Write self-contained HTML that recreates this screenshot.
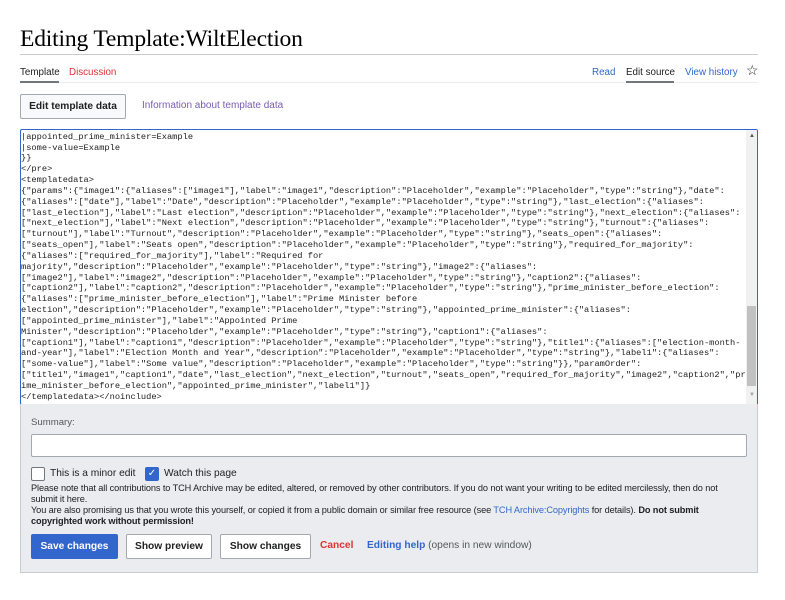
<!DOCTYPE html>
<html><head><meta charset="utf-8"><style>
*{box-sizing:border-box;margin:0;padding:0}
body{width:785px;height:600px;background:#fff;font-family:"Liberation Sans",sans-serif;position:relative;overflow:hidden;color:#202122}
.abs{position:absolute}
h1{position:absolute;left:20px;top:26px;font-family:"Liberation Serif",serif;font-weight:normal;font-size:23.6px;color:#000;letter-spacing:-0.2px}
.rule{left:20px;width:738px;top:54px;height:1px;background:#c8ccd1}
.tab{font-size:9.8px;top:67px}
.tabline{top:82px;height:1px;background:#eaecf0;left:20px;width:738px}
.btn{border:1px solid #a2a9b1;border-radius:2px;background:#f8f9fa;font-weight:bold;font-size:10.2px;display:flex;align-items:center;justify-content:center;color:#202122}
.ta{left:20px;top:129px;width:738px;height:276px;border:1px solid #36c;border-radius:2px;overflow:hidden;background:#fff}
.code{position:absolute;left:0px;top:-9px;font-family:"Liberation Mono",monospace;font-size:8.7px;line-height:10.83px;white-space:pre;color:#222}
.sb{position:absolute;right:0;top:0;width:11px;height:274px;background:#f1f1f1}
.panel{left:20px;top:404px;width:738px;height:169px;background:#eaecf0;border:1px solid #c8ccd1;border-top:none}
.sm{font-size:9.2px;line-height:11px;color:#202122;letter-spacing:-0.1px}
a{text-decoration:none}
</style></head><body>
<h1>Editing Template:WiltElection</h1>
<div class="abs rule"></div>
<div class="abs tab" style="left:20px;color:#202122">Template</div>
<div class="abs tab" style="left:69px;color:#d33">Discussion</div>
<div class="abs tab" style="left:592px;color:#36c">Read</div>
<div class="abs tab" style="left:626px;color:#202122">Edit source</div>
<div class="abs tab" style="left:685px;color:#36c">View history</div>
<div class="abs" style="left:746px;top:62px;font-size:14px;color:#202122">☆</div>
<div class="abs tabline"></div>
<div class="abs" style="left:20px;top:81px;width:39px;height:2px;background:#72777d"></div>
<div class="abs" style="left:626px;top:81px;width:48px;height:2px;background:#72777d"></div>
<div class="abs btn" style="left:20px;top:94px;width:106px;height:25px">Edit template data</div>
<div class="abs" style="left:142px;top:100px;font-size:10px;color:#795cb2">Information about template data</div>
<div class="abs ta"><div class="code">.........................................
|appointed_prime_minister=Example
|some-value=Example
}}
&lt;/pre&gt;
&lt;templatedata&gt;
{"params":{"image1":{"aliases":["image1"],"label":"image1","description":"Placeholder","example":"Placeholder","type":"string"},"date":
{"aliases":["date"],"label":"Date","description":"Placeholder","example":"Placeholder","type":"string"},"last_election":{"aliases":
["last_election"],"label":"Last election","description":"Placeholder","example":"Placeholder","type":"string"},"next_election":{"aliases":
["next_election"],"label":"Next election","description":"Placeholder","example":"Placeholder","type":"string"},"turnout":{"aliases":
["turnout"],"label":"Turnout","description":"Placeholder","example":"Placeholder","type":"string"},"seats_open":{"aliases":
["seats_open"],"label":"Seats open","description":"Placeholder","example":"Placeholder","type":"string"},"required_for_majority":
{"aliases":["required_for_majority"],"label":"Required for
majority","description":"Placeholder","example":"Placeholder","type":"string"},"image2":{"aliases":
["image2"],"label":"image2","description":"Placeholder","example":"Placeholder","type":"string"},"caption2":{"aliases":
["caption2"],"label":"caption2","description":"Placeholder","example":"Placeholder","type":"string"},"prime_minister_before_election":
{"aliases":["prime_minister_before_election"],"label":"Prime Minister before
election","description":"Placeholder","example":"Placeholder","type":"string"},"appointed_prime_minister":{"aliases":
["appointed_prime_minister"],"label":"Appointed Prime
Minister","description":"Placeholder","example":"Placeholder","type":"string"},"caption1":{"aliases":
["caption1"],"label":"caption1","description":"Placeholder","example":"Placeholder","type":"string"},"title1":{"aliases":["election-month-
and-year"],"label":"Election Month and Year","description":"Placeholder","example":"Placeholder","type":"string"},"label1":{"aliases":
["some-value"],"label":"Some value","description":"Placeholder","example":"Placeholder","type":"string"}},"paramOrder":
["title1","image1","caption1","date","last_election","next_election","turnout","seats_open","required_for_majority","image2","caption2","pr
ime_minister_before_election","appointed_prime_minister","label1"]}
&lt;/templatedata&gt;&lt;/noinclude&gt;</div>
<div class="sb"><div style="position:absolute;left:1px;top:176px;width:9px;height:80px;background:#c1c1c1"></div>
<div style="position:absolute;left:3px;top:3px;font-size:6px;color:#505050">▲</div>
<div style="position:absolute;left:3px;top:262px;font-size:6px;color:#a0a0a0">▼</div></div>
</div>
<div class="abs panel"></div>
<div class="abs" style="left:31px;top:417px;font-size:9.6px;color:#54595d">Summary:</div>
<div class="abs" style="left:31px;top:434px;width:716px;height:23px;background:#fff;border:1px solid #a2a9b1;border-radius:2px"></div>
<div class="abs" style="left:31px;top:467px;width:14px;height:14px;border:1px solid #72777d;border-radius:2px;background:#fff"></div>
<div class="abs" style="left:50px;top:468px;font-size:10.2px">This is a minor edit</div>
<div class="abs" style="left:145px;top:467px;width:14px;height:14px;background:#36c;border-radius:2px;color:#fff;font-size:10px;text-align:center;line-height:14px">✓</div>
<div class="abs" style="left:164px;top:468px;font-size:10.2px">Watch this page</div>
<div class="abs sm" style="left:31px;top:483px;width:706px">Please note that all contributions to TCH Archive may be edited, altered, or removed by other contributors. If you do not want your writing to be edited mercilessly, then do not submit it here.<br>You are also promising us that you wrote this yourself, or copied it from a public domain or similar free resource (see <a style="color:#36c">TCH Archive:Copyrights</a> for details). <b>Do not submit copyrighted work without permission!</b></div>
<div class="abs btn" style="left:31px;top:534px;width:87px;height:25px;background:#36c;border-color:#36c;color:#fff">Save changes</div>
<div class="abs btn" style="left:126px;top:534px;width:86px;height:25px;background:#fff">Show preview</div>
<div class="abs btn" style="left:220px;top:534px;width:91px;height:25px;background:#fff">Show changes</div>
<div class="abs" style="left:320px;top:540px;font-size:10.2px;font-weight:bold;color:#d33">Cancel</div>
<div class="abs" style="left:367px;top:540px;font-size:10.2px;color:#54595d"><b style="color:#36c">Editing help</b> (opens in new window)</div>
</body></html>
